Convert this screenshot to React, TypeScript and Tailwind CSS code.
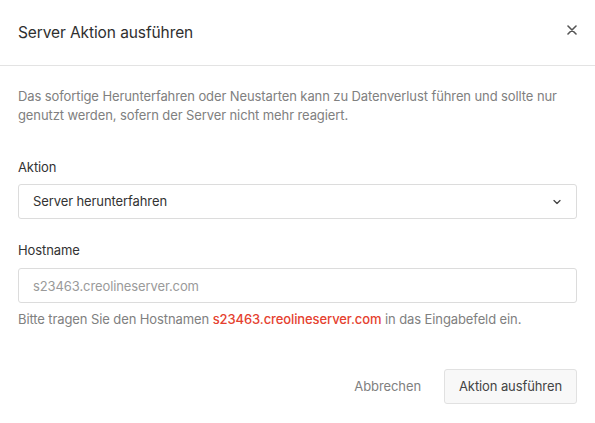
import { useState } from 'react'

export default function App() {
    const [hostname, setHostname] = useState('')

    return (
        <div className="w-[595px] h-[423px] bg-white font-['Inter','Liberation_Sans',Arial,sans-serif] text-[#333] tracking-[-0.1px]">
            <div className="flex items-center justify-between h-[66px] px-[18px] border-b border-[#e3e3e3]">
                <h2 className="text-[15.5px] leading-none pt-[1px] text-[#2f2f2f]">Server Aktion ausführen</h2>
                <button className="flex items-center justify-center w-[12px] h-[12px] -mr-[1px] mb-[6px] text-[#555]">
                    <svg width="10" height="10" viewBox="0 0 10 10" fill="none" stroke="currentColor" strokeWidth="1.6" strokeLinecap="round">
                        <path d="M1 1L9 9M9 1L1 9" />
                    </svg>
                </button>
            </div>

            <div className="px-[18px] pt-[21px]">
                <p className="text-[13px] leading-[19px] text-[#808080]">
                    Das sofortige Herunterfahren oder Neustarten kann zu Datenverlust führen und sollte nur genutzt werden, sofern der Server nicht mehr reagiert.
                </p>

                <label className="block mt-[33px] text-[13px] leading-[19px] text-[#333]">Aktion</label>
                <div className="relative mt-[7px]">
                    <select className="appearance-none w-full h-[35px] pl-[14px] pr-8 text-[13px] text-[#333] bg-white border border-[#dcdcdc] rounded-[3px] outline-none">
                        <option>Server herunterfahren</option>
                        <option>Server neustarten</option>
                    </select>
                    <span className="absolute right-[16px] top-1/2 -translate-y-1/2 pointer-events-none text-[#444]">
                        <svg width="8" height="5" viewBox="0 0 8 5" fill="none" stroke="currentColor" strokeWidth="1.3" strokeLinecap="round" strokeLinejoin="round">
                            <path d="M1 1L4 4L7 1" />
                        </svg>
                    </span>
                </div>

                <label className="block mt-[22px] text-[13px] leading-[19px] text-[#333]">Hostname</label>
                <input
                    value={hostname}
                    onChange={(e) => setHostname(e.target.value)}
                    placeholder="s23463.creolineserver.com"
                    className="block w-full mt-[8px] h-[35px] px-[14px] text-[13px] text-[#333] placeholder:text-[#9a9a9a] border border-[#dcdcdc] rounded-[3px] outline-none"
                />
                <p className="mt-[7px] text-[13px] leading-[19px] text-[#808080]">
                    Bitte tragen Sie den Hostnamen <span className="font-medium text-[#e5412f]">s23463.creolineserver.com</span> in das Eingabefeld ein.
                </p>

                <div className="flex justify-end items-center gap-[23px] mt-[40px]">
                    <button className="text-[13px] text-[#808080]">Abbrechen</button>
                    <button className="h-[35px] px-[14px] text-[13px] text-[#444] bg-[#f8f8f8] border border-[#e1e1e1] rounded-[3px]">
                        Aktion ausführen
                    </button>
                </div>
            </div>
        </div>
    )
}
